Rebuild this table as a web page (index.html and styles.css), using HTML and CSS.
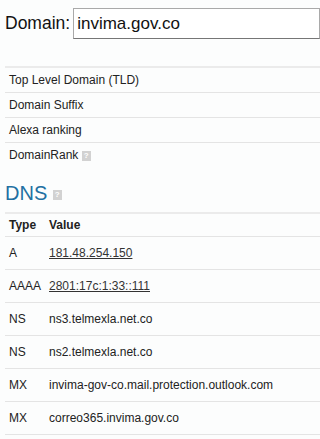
FILE: index.html
```html
<!DOCTYPE html>
<html lang="en">
<head>
    <meta charset="UTF-8">
    <meta name="viewport" content="width=device-width, initial-scale=1.0">
    <title>Domain info - invima.gov.co</title>
    <link rel="stylesheet" href="styles.css">
</head>
<body>
    <div class="page">
        <form class="search">
            <label for="domain">Domain:</label>
            <input type="text" id="domain" value="invima.gov.co">
        </form>

        <table class="info">
            <tr><td>Top Level Domain (TLD)</td><td></td></tr>
            <tr><td>Domain Suffix</td><td></td></tr>
            <tr><td>Alexa ranking</td><td></td></tr>
            <tr><td>DomainRank <span class="help">?</span></td><td></td></tr>
        </table>

        <h2>DNS <span class="help">?</span></h2>

        <table class="dns">
            <thead>
                <tr><th class="type">Type</th><th>Value</th></tr>
            </thead>
            <tbody>
                <tr><td class="type">A</td><td><a href="#">181.48.254.150</a></td></tr>
                <tr><td class="type">AAAA</td><td><a href="#">2801:17c:1:33::111</a></td></tr>
                <tr><td class="type">NS</td><td>ns3.telmexla.net.co</td></tr>
                <tr><td class="type">NS</td><td>ns2.telmexla.net.co</td></tr>
                <tr><td class="type">MX</td><td>invima-gov-co.mail.protection.outlook.com</td></tr>
                <tr><td class="type">MX</td><td>correo365.invima.gov.co</td></tr>
            </tbody>
        </table>
    </div>
</body>
</html>
```

FILE: styles.css
```css
body {
    font-family: "Liberation Sans", Arial, sans-serif;
    font-size: 12px;
    line-height: 17px;
    background: #fcfdfd;
    color: #222;
    margin: 0;
}
.page {
    padding: 8px 0 0 5px;
    overflow: hidden;
}
.search {
    display: flex;
    align-items: center;
    gap: 3px;
    margin: 0;
    white-space: nowrap;
}
.search label {
    font-size: 17.5px;
    color: #111;
}
.search input {
    font-family: "Liberation Sans", Arial, sans-serif;
    font-size: 17px;
    width: 300px;
    height: 31px;
    box-sizing: border-box;
    padding: 0 3px;
    border: 1px solid #a9a9a9;
    border-bottom-color: #767676;
    color: #111;
    background: #fff;
}
table {
    width: 100%;
    border-collapse: collapse;
}
.info {
    margin-top: 27px;
    border-top: 2px solid #ebebeb;
}
.info td {
    padding: 4px;
    line-height: 16px;
    border-bottom: 1px solid #e4e4e4;
}
.info tr:last-child td {
    border-bottom: none;
}
.help {
    display: inline-block;
    width: 9px;
    height: 10px;
    background: #d2d2d2;
    color: #fff;
    font-size: 8px;
    line-height: 10px;
    text-align: center;
    font-weight: bold;
    vertical-align: middle;
}
h2 {
    font-size: 20px;
    font-weight: normal;
    color: #2270a2;
    margin: 14px 0 7px;
    line-height: 24px;
}
.dns {
    border-top: 2px solid #ebebeb;
}
.dns th {
    text-align: left;
    padding: 3px 4px 2px;
    border-bottom: 1px solid #e4e4e4;
}
.dns td {
    padding: 8px 4px 7px;
    border-bottom: 1px solid #e4e4e4;
}
.dns .type {
    width: 31px;
}
.dns a {
    color: #333;
}
```
